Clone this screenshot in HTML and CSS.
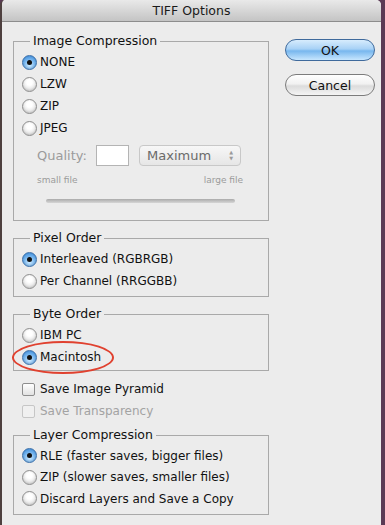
FILE: index.html
```html
<!DOCTYPE html>
<html lang="en">

<head>
    <meta charset="UTF-8">
    <title>TIFF Options</title>
    <link rel="stylesheet" href="styles.css">
</head>

<body>
    <div class="window">
        <div class="titlebar">TIFF Options</div>
        <div class="dialog">
            <div class="left-col">
                <fieldset class="group group-image">
                    <legend>Image Compression</legend>
                    <div class="row"><span class="radio checked"></span>NONE</div>
                    <div class="row"><span class="radio"></span>LZW</div>
                    <div class="row"><span class="radio"></span>ZIP</div>
                    <div class="row"><span class="radio"></span>JPEG</div>
                    <div class="quality">
                        <span class="quality-label">Quality:</span>
                        <span class="quality-input"></span>
                        <span class="select">Maximum<span class="arrows">&#9650;<br>&#9660;</span></span>
                    </div>
                    <div class="scale-labels">
                        <span>small file</span>
                        <span>large file</span>
                    </div>
                    <div class="slider"></div>
                </fieldset>

                <fieldset class="group group-pixel">
                    <legend>Pixel Order</legend>
                    <div class="row"><span class="radio checked"></span>Interleaved (RGBRGB)</div>
                    <div class="row"><span class="radio"></span>Per Channel (RRGGBB)</div>
                </fieldset>

                <fieldset class="group group-byte">
                    <legend>Byte Order</legend>
                    <div class="row"><span class="radio"></span>IBM PC</div>
                    <div class="row marked"><span class="radio checked"></span>Macintosh<span class="circle-mark"></span></div>
                </fieldset>

                <div class="checks">
                    <div class="row"><span class="checkbox"></span>Save Image Pyramid</div>
                    <div class="row disabled"><span class="checkbox"></span>Save Transparency</div>
                </div>

                <fieldset class="group group-layer">
                    <legend>Layer Compression</legend>
                    <div class="row"><span class="radio checked"></span>RLE (faster saves, bigger files)</div>
                    <div class="row"><span class="radio"></span>ZIP (slower saves, smaller files)</div>
                    <div class="row"><span class="radio"></span>Discard Layers and Save a Copy</div>
                </fieldset>
            </div>

            <div class="right-col">
                <button class="btn btn-default">OK</button>
                <button class="btn">Cancel</button>
            </div>
        </div>
    </div>
</body>

</html>
```

FILE: styles.css
```css
body {
    margin: 0;
    padding: 0;
    background: #5b3a55;
    font-family: "DejaVu Sans", Arial, sans-serif;
    font-size: 12px;
    color: #111;
}

.window {
    width: 379px;
    height: 525px;
    background: #ececec;
    border-left: 2px solid #4e403f;
    border-radius: 5px 5px 0 0;
    overflow: hidden;
}

.titlebar {
    height: 22px;
    line-height: 22px;
    text-align: center;
    font-size: 12.5px;
    color: #1a1a1a;
    background: linear-gradient(#e9e9e9, #c4c4c4);
    border-bottom: 1px solid #8d8d8d;
    box-sizing: border-box;
}

.dialog {
    display: flex;
}

.left-col {
    width: 256px;
    margin-left: 11px;
    padding-top: 11px;
}

.group {
    margin: 0;
    padding: 2px 0 4px 8px;
    border: 1px solid #a9a9a9;
    min-width: 0;
}

.group legend {
    margin-left: 8px;
    padding: 0 3px;
    height: 16px;
    line-height: 16px;
    font-size: 12.5px;
}

.row {
    display: flex;
    align-items: center;
    height: 22px;
    font-size: 12px;
    white-space: nowrap;
}

.radio {
    width: 13px;
    height: 13px;
    margin-right: 3px;
    border-radius: 50%;
    border: 1px solid #8e8e8e;
    background: radial-gradient(circle at 50% 35%, #ffffff 25%, #d0d0d0 100%);
    box-shadow: inset 0 -1px 2px rgba(0, 0, 0, 0.12);
    display: flex;
    align-items: center;
    justify-content: center;
    flex-shrink: 0;
}

.radio.checked {
    border-color: #3b6fa8;
    background: radial-gradient(circle at 50% 70%, #bfe3ff 10%, #6eb0ec 55%, #2f7fd0 100%);
}

.radio.checked::after {
    content: "";
    width: 5px;
    height: 5px;
    border-radius: 50%;
    background: #111;
}

.checkbox {
    width: 11px;
    height: 11px;
    margin: 0 5px 0 1px;
    border: 1px solid #8e8e8e;
    border-radius: 2px;
    background: linear-gradient(#ffffff, #e2e2e2);
    flex-shrink: 0;
}

.disabled {
    color: #a3a3a3;
}

.disabled .checkbox {
    border-color: #c6c6c6;
    background: #f0f0f0;
}

.quality {
    display: flex;
    align-items: center;
    height: 21px;
    margin-top: 6px;
    padding-left: 15px;
    color: #9b9b9b;
    font-size: 13px;
}

.quality-label {
    width: 59px;
}

.quality-input {
    width: 31px;
    height: 19px;
    background: #fff;
    border: 1px solid #b4b4b4;
    margin-right: 10px;
}

.select {
    position: relative;
    width: 93px;
    height: 19px;
    line-height: 19px;
    padding-left: 7px;
    border: 1px solid #c8c8c8;
    border-radius: 4px;
    background: linear-gradient(#f7f7f7, #e6e6e6);
    color: #6a6a6a;
}

.arrows {
    position: absolute;
    right: 7px;
    top: 3px;
    font-size: 5px;
    line-height: 6px;
    color: #9a9a9a;
}

.scale-labels {
    display: flex;
    justify-content: space-between;
    width: 206px;
    margin: 8px 0 0 15px;
    font-size: 9px;
    line-height: 12px;
    color: #9b9b9b;
}

.slider {
    width: 189px;
    height: 4px;
    margin: 13px 0 13px 24px;
    border-radius: 2px;
    background: linear-gradient(#aaaaaa, #d6d6d6);
}

.group-pixel {
    margin-top: 9px;
}

.group-byte {
    margin-top: 9px;
    padding-bottom: 2px;
}

.marked {
    position: relative;
}

.circle-mark {
    position: absolute;
    left: -10px;
    top: -5px;
    width: 98px;
    height: 29px;
    border: 2px solid #e0412f;
    border-radius: 50%;
}

.checks {
    margin-top: 7px;
    padding-left: 8px;
}

.group-layer {
    margin-top: 5px;
    padding-bottom: 4px;
}

.group-layer .row {
    height: 21.5px;
}

.right-col {
    display: flex;
    flex-direction: column;
    gap: 13px;
    margin-left: 16px;
    padding-top: 17px;
}

.btn {
    width: 90px;
    height: 22px;
    padding: 0;
    border: 1px solid #7c7c7c;
    border-radius: 11px;
    font-family: "DejaVu Sans", Arial, sans-serif;
    font-size: 12.5px;
    color: #111;
    background: linear-gradient(#ffffff 0%, #f1f1f1 45%, #dcdcdc 55%, #f4f4f4 100%);
}

.btn-default {
    border-color: #3f6a9c;
    background: linear-gradient(#d7ecfd 0%, #a7d1f6 45%, #78b7ee 55%, #c7e6fe 100%);
}
```
